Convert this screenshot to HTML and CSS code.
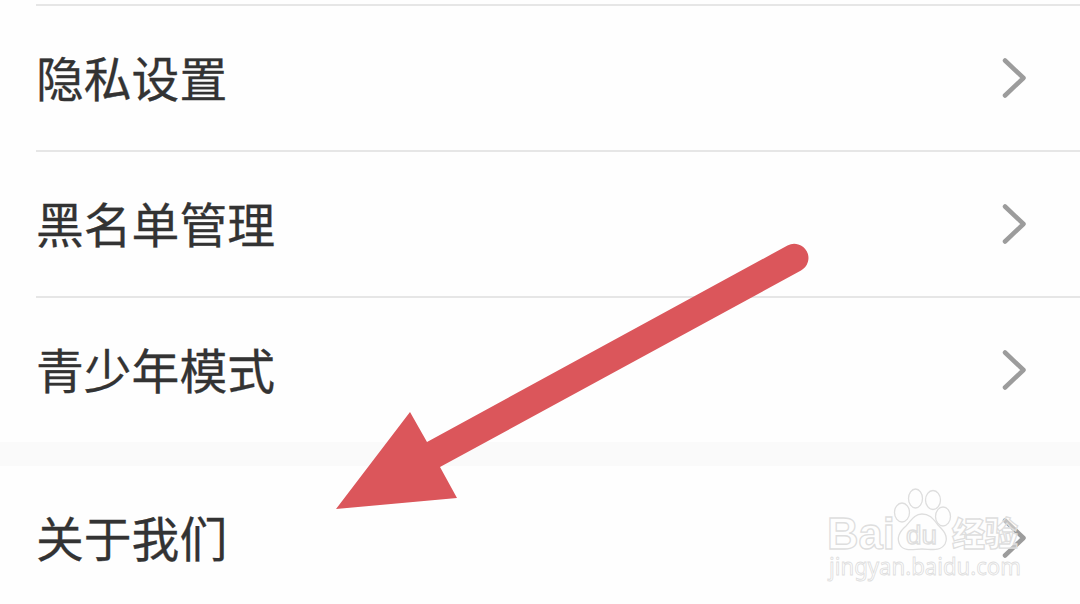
FILE: index.html
```html
<!DOCTYPE html>
<html lang="zh-CN">
<head>
<meta charset="utf-8">
<title>设置</title>
<link rel="stylesheet" href="styles.css">
</head>
<body>
<main class="screen">
  <div class="divider"></div>
  <div class="row"><span class="label">隐私设置</span><svg class="chevron" viewBox="0 0 28 44"><path d="M5 4.500 23.500 22 5 39.500"/></svg></div>
  <div class="divider"></div>
  <div class="row"><span class="label">黑名单管理</span><svg class="chevron" viewBox="0 0 28 44"><path d="M5 4.500 23.500 22 5 39.500"/></svg></div>
  <div class="divider"></div>
  <div class="row"><span class="label">青少年模式</span><svg class="chevron" viewBox="0 0 28 44"><path d="M5 4.500 23.500 22 5 39.500"/></svg></div>
  <div class="band"></div>
  <div class="row"><span class="label">关于我们</span><svg class="chevron" viewBox="0 0 28 44"><path d="M5 4.500 23.500 22 5 39.500"/></svg></div>

  <svg class="arrow" viewBox="0 0 480 270"><path d="M0 269 74 172 91 202 451.500 5.500A14 14 0 0 1 465 30.500L104 227 121 258Z"/></svg>

  <svg class="watermark" viewBox="0 0 220 110">
    <g class="mark">
      <text class="brand" x="7" y="69" textLength="68" lengthAdjust="spacingAndGlyphs">Bai</text>
      <ellipse cx="82" cy="32.500" rx="7.500" ry="9.500"/>
      <ellipse cx="95.500" cy="18.500" rx="7" ry="9.500"/>
      <ellipse cx="113" cy="20" rx="7.500" ry="9.500"/>
      <ellipse cx="123" cy="36.500" rx="7.500" ry="9.500"/>
      <path d="M102 34C94 34 91 41 86 46C79 52 76 58 80 65C84 72 94 69 102 69C111 69 120 72 125 64C129 56 123 50 118 45C113 39 110 34 102 34Z"/>
      <text class="paw-text" x="86" y="64" textLength="31" lengthAdjust="spacingAndGlyphs">du</text>
      <text class="product" x="132" y="66" textLength="66" lengthAdjust="spacingAndGlyphs">经验</text>
      <text class="site" x="9" y="95" textLength="192" lengthAdjust="spacingAndGlyphs">jingyan.baidu.com</text>
    </g>
  </svg>
</main>
</body>
</html>
```
FILE: styles.css
```css
body {
  margin: 0;
  background: #fefefe;
}

.screen {
  position: relative;
  box-sizing: border-box;
  width: 1080px;
  height: 604px;
  padding-top: 4px;
  overflow: hidden;
  font-family: "Noto Sans CJK SC", sans-serif;
}

.divider {
  height: 2px;
  margin-left: 36px;
  background: #e6e6e6;
}

.row {
  display: flex;
  align-items: center;
  justify-content: space-between;
  box-sizing: border-box;
  height: 144px;
  padding: 0 52px 0 36px;
}

.label {
  padding-bottom: 2px;
  color: #333;
  font-size: 47.8px;
  line-height: 70px;
  -webkit-text-stroke: 0.3px #333;
}

.chevron {
  width: 28px;
  height: 44px;
  fill: none;
  stroke: #9c9c9c;
  stroke-width: 4.5;
  stroke-linecap: round;
  stroke-linejoin: round;
}

.band {
  height: 24px;
  background: #fafafa;
}

.arrow {
  position: absolute;
  left: 336px;
  top: 240px;
  width: 480px;
  height: 270px;
  fill: #db565b;
}

.watermark {
  position: absolute;
  left: 820px;
  top: 480px;
  width: 220px;
  height: 110px;
}

.mark {
  fill: #fff;
  fill-opacity: 0.4;
  stroke: #dedede;
  stroke-width: 1.3;
}

.brand {
  font: bold 44px "Liberation Sans", sans-serif;
}

.paw-text {
  font: 25px "Liberation Sans", sans-serif;
}

.product {
  font: 900 33px "Noto Sans CJK SC", sans-serif;
}

.site {
  font: 24px "Noto Sans", sans-serif;
  stroke-width: 0.9;
}
```
